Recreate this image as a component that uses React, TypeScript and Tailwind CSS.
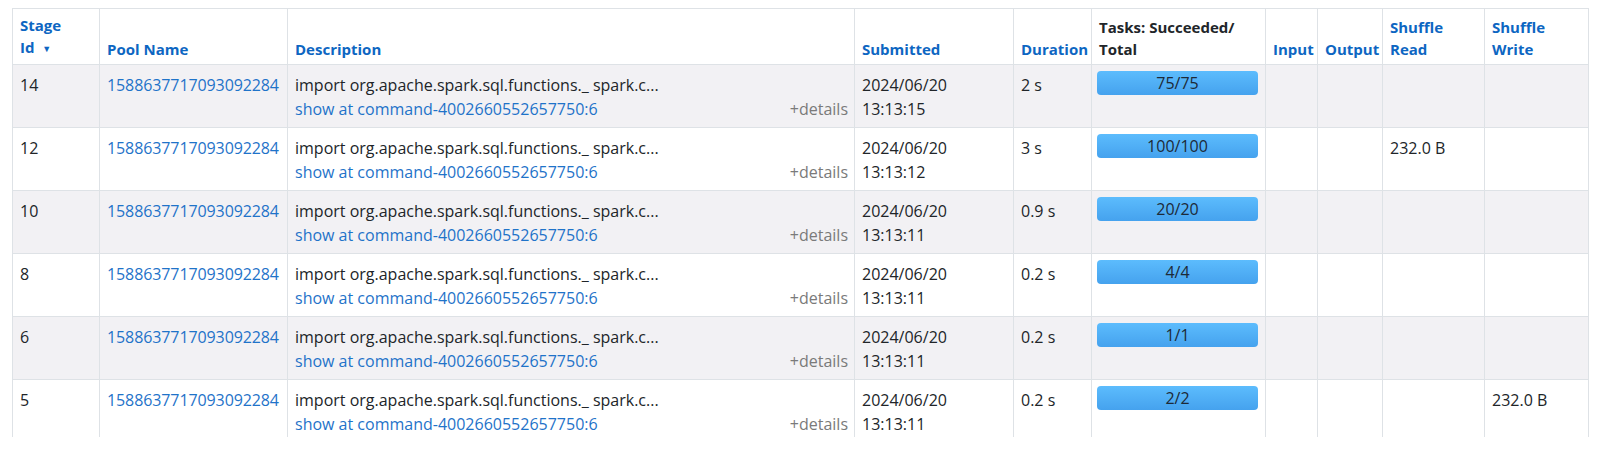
const rows = [
  { id: "14", date: "13:13:15", dur: "2 s", done: 75, total: 75, read: "", write: "" },
  { id: "12", date: "13:13:12", dur: "3 s", done: 100, total: 100, read: "232.0 B", write: "" },
  { id: "10", date: "13:13:11", dur: "0.9 s", done: 20, total: 20, read: "", write: "" },
  { id: "8", date: "13:13:11", dur: "0.2 s", done: 4, total: 4, read: "", write: "" },
  { id: "6", date: "13:13:11", dur: "0.2 s", done: 1, total: 1, read: "", write: "" },
  { id: "5", date: "13:13:11", dur: "0.2 s", done: 2, total: 2, read: "", write: "232.0 B" },
];

const th = "border border-[#dee2e6] px-[7px] pt-[5px] pb-[4px] align-bottom text-left font-bold text-[15px] leading-[22px]";
const td = "border border-[#dee2e6] px-[7px] pt-2 pb-[6px] align-top leading-6";

const App = () => {
  return (
    <div className="bg-white h-[449px] font-['Open_Sans',sans-serif] text-[16px] text-[#212529]">
      <div className="h-[437px] overflow-hidden pl-3 pt-2">
        <div className="w-[1577px]">
          <table className="table-fixed border-collapse w-full">
            <colgroup>
              <col className="w-[87px]" />
              <col className="w-[188px]" />
              <col className="w-[567px]" />
              <col className="w-[159px]" />
              <col className="w-[78px]" />
              <col className="w-[174px]" />
              <col className="w-[52px]" />
              <col className="w-[65px]" />
              <col className="w-[102px]" />
              <col />
            </colgroup>
            <thead className="text-[#0d66c2]">
              <tr>
                <th className={th}>
                  Stage
                  <br />
                  Id <span className="text-[9px] align-middle ml-1">▼</span>
                </th>
                <th className={th}>Pool Name</th>
                <th className={th}>Description</th>
                <th className={th}>Submitted</th>
                <th className={th}>Duration</th>
                <th className={th + " text-[#212529]"}>
                  Tasks: Succeeded/
                  <br />
                  Total
                </th>
                <th className={th}>Input</th>
                <th className={th}>Output</th>
                <th className={th}>
                  Shuffle
                  <br />
                  Read
                </th>
                <th className={th}>
                  Shuffle
                  <br />
                  Write
                </th>
              </tr>
            </thead>
            <tbody>
              {rows.map((r, i) => (
                <tr key={r.id} className={i % 2 === 0 ? "bg-[#f2f1f4]" : "bg-white"}>
                  <td className={td}>{r.id}</td>
                  <td className={td + " text-[#1f73c9] tracking-[-0.1px]"}>1588637717093092284</td>
                  <td className={td + " pr-[6px]"}>
                    <div className="whitespace-nowrap">import org.apache.spark.sql.functions._ spark.c...</div>
                    <div className="flex justify-between whitespace-nowrap">
                      <span className="text-[#1f73c9]">show at command-4002660552657750:6</span>
                      <span className="text-[#7a7a7a]">+details</span>
                    </div>
                  </td>
                  <td className={td}>
                    2024/06/20
                    <br />
                    {r.date}
                  </td>
                  <td className={td}>{r.dur}</td>
                  <td className="border border-[#dee2e6] pl-[5px] pr-[7px] pt-[6px] align-top">
                    <div className="h-6 rounded-[4px] bg-gradient-to-b from-[#5cbcfd] to-[#45a2ee] text-center leading-6 text-[#1d2a38]">
                      {r.done}/{r.total}
                    </div>
                  </td>
                  <td className={td}></td>
                  <td className={td}></td>
                  <td className={td}>{r.read}</td>
                  <td className={td}>{r.write}</td>
                </tr>
              ))}
            </tbody>
          </table>
        </div>
      </div>
    </div>
  );
};

export default App;
